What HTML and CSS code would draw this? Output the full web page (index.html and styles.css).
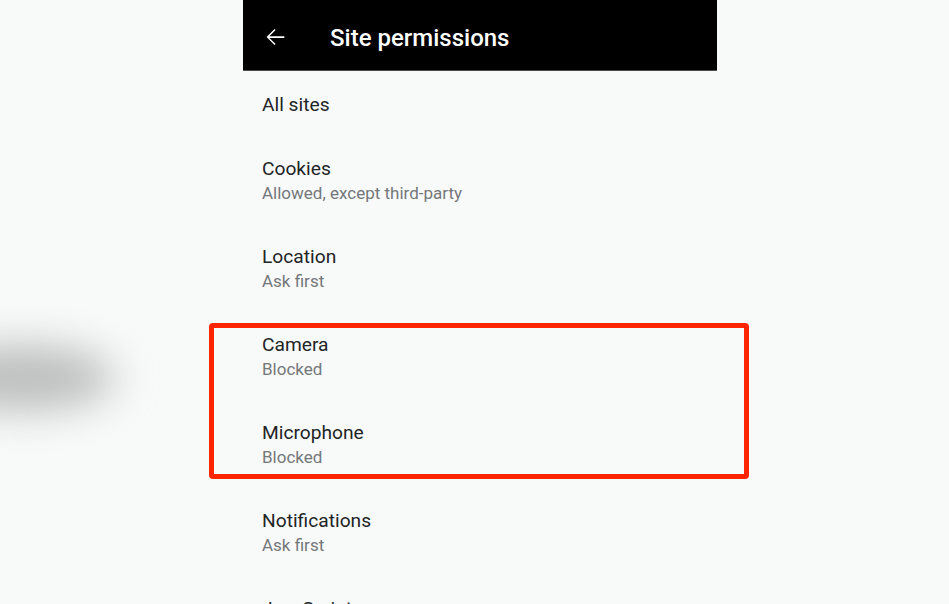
FILE: index.html
```html
<!DOCTYPE html>
<html lang="en">
<head>
    <meta charset="UTF-8">
    <meta name="viewport" content="width=device-width, initial-scale=1.0">
    <title>Site permissions</title>
    <link rel="stylesheet" href="styles.css">
</head>
<body>
    <div class="smudge"></div>

    <main class="screen">
        <header class="toolbar">
            <button class="back" aria-label="Back">
                <svg width="28" height="28" viewBox="0 0 24 24">
                    <path d="M20 11.25H7.2l5.3-5.3-.9-.9L4.8 12l6.8 6.95.9-.9-5.3-5.3H20v-1.5z" fill="#fff"/>
                </svg>
            </button>
            <h1>Site permissions</h1>
        </header>

        <ul class="prefs">
            <li class="pref single"><span class="pref-title">All sites</span></li>
            <li class="pref">
                <span class="pref-title">Cookies</span>
                <span class="pref-summary">Allowed, except third-party</span>
            </li>
            <li class="pref">
                <span class="pref-title">Location</span>
                <span class="pref-summary">Ask first</span>
            </li>
            <li class="pref">
                <span class="pref-title">Camera</span>
                <span class="pref-summary">Blocked</span>
            </li>
            <li class="pref">
                <span class="pref-title">Microphone</span>
                <span class="pref-summary">Blocked</span>
            </li>
            <li class="pref">
                <span class="pref-title">Notifications</span>
                <span class="pref-summary">Ask first</span>
            </li>
            <li class="pref">
                <span class="pref-title">JavaScript</span>
                <span class="pref-summary">Allowed</span>
            </li>
        </ul>
    </main>

    <!-- annotation drawn over the screenshot -->
    <div class="highlight"></div>
</body>
</html>
```

FILE: styles.css
```css
html, body {
    height: 100%;
}
body {
    margin: 0;
    background-color: #f8faf9;
    font-family: Roboto, 'Noto Sans', sans-serif;
    color: #202124;
    overflow: hidden;
}
.screen {
    width: 474px;
    margin-left: 243px;
}
.toolbar {
    display: flex;
    align-items: center;
    height: 71px;
    padding-top: 6px;
    box-sizing: border-box;
    background-color: #000;
    border-bottom: 1px solid #4a4a4a;
}
.back {
    display: flex;
    align-items: center;
    justify-content: center;
    width: 28px;
    height: 28px;
    margin-left: 18px;
    margin-top: -2px;
    padding: 0;
    border: none;
    background: none;
    cursor: pointer;
}
.toolbar h1 {
    margin: 0 0 0 41px;
    color: #fff;
    font-size: 24px;
    font-weight: 500;
}
.prefs {
    list-style: none;
    margin: 0;
    padding: 0;
}
.pref {
    display: flex;
    flex-direction: column;
    justify-content: center;
    height: 88px;
    padding-left: 19px;
    padding-top: 1px;
    box-sizing: border-box;
}
.pref.single {
    height: 66px;
}
.pref-title {
    font-size: 19.2px;
    line-height: 24px;
    color: #222426;
}
.pref-summary {
    font-size: 17px;
    line-height: 25px;
    color: #74777a;
}
.highlight {
    position: absolute;
    left: 209px;
    top: 323px;
    width: 530px;
    height: 146px;
    border: 5px solid #ff2400;
    border-radius: 4px;
}
.smudge {
    position: absolute;
    left: -70px;
    top: 345px;
    width: 185px;
    height: 66px;
    border-radius: 50%;
    background-color: #bcbebd;
    filter: blur(20px);
}
```
